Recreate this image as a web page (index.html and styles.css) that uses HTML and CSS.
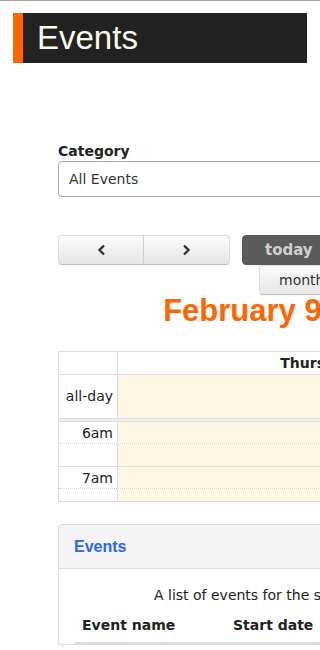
FILE: index.html
```html
<!DOCTYPE html>
<html lang="en">
<head>
<meta charset="utf-8">
<title>Events</title>
<link rel="stylesheet" href="styles.css">
</head>
<body>
<header class="page-header">
  <h1 class="page-title">Events</h1>
</header>

<main class="content">
  <div class="filter">
    <label class="filter-label" for="cat">Category</label>
    <div class="select" id="cat">All Events</div>
  </div>

  <div class="toolbar">
    <div class="btn-group">
      <button class="btn btn-nav" aria-label="prev">
        <svg width="9" height="12" viewBox="0 0 9 12"><polyline points="7,1.5 2.5,6 7,10.5" fill="none" stroke="#333" stroke-width="2.4"/></svg>
      </button>
      <button class="btn btn-nav" aria-label="next">
        <svg width="9" height="12" viewBox="0 0 9 12"><polyline points="2,1.5 6.5,6 2,10.5" fill="none" stroke="#333" stroke-width="2.4"/></svg>
      </button>
    </div>
    <button class="btn btn-today">today</button>
    <div class="views">
      <button class="btn btn-view">month</button>
      <button class="btn btn-view">week</button>
      <button class="btn btn-view">day</button>
    </div>
  </div>

  <h2 class="cal-title">February 9, 2023</h2>

  <div class="grid">
    <div class="grid-head">
      <div class="axis"></div>
      <div class="day-head">Thursday 2/9</div>
    </div>
    <div class="allday-row">
      <div class="axis axis-label">all-day</div>
      <div class="day-cell"></div>
    </div>
    <div class="divider"></div>
    <div class="slots">
      <div class="slot slot-major"><div class="axis axis-label">6am</div><div class="day-cell"></div></div>
      <div class="slot slot-minor"><div class="axis"></div><div class="day-cell"></div></div>
      <div class="slot slot-major"><div class="axis axis-label">7am</div><div class="day-cell"></div></div>
      <div class="slot slot-minor"><div class="axis"></div><div class="day-cell"></div></div>
      <div class="slot slot-major"><div class="axis axis-label">8am</div><div class="day-cell"></div></div>
    </div>
  </div>

  <section class="panel">
    <div class="panel-head">Events</div>
    <div class="panel-body">
      <p class="caption">A list of events for the selected day</p>
      <div class="list-head">
        <span class="col-name">Event name</span>
        <span class="col-date">Start date</span>
      </div>
    </div>
  </section>
</main>
</body>
</html>
```
FILE: styles.css
```css
html, body {
  margin: 0;
  padding: 0;
}
body {
  border-top: 1px solid #a2a2a2;
  overflow: hidden;
  font-family: "DejaVu Sans", Verdana, sans-serif;
  font-size: 14px;
  color: #222;
  background: #fff;
  width: 320px;
}

.page-header {
  margin: 12px 13px 0;
  height: 50px;
  background: #222;
  border-left: 10px solid #ff6600;
  display: flex;
  align-items: center;
  padding-left: 14px;
}
.page-title {
  margin: 0;
  font-family: "Liberation Sans", Arial, sans-serif;
  font-weight: normal;
  font-size: 33px;
  line-height: 38px;
  color: #fbfbec;
}

.content {
  margin-left: 58px;
  width: 470px;
  padding-top: 80px;
}

.filter-label {
  display: block;
  font-weight: bold;
  font-size: 14px;
  line-height: 17px;
  margin-bottom: 1px;
}
.select {
  box-sizing: border-box;
  height: 36px;
  border: 1px solid #aaa;
  border-radius: 4px;
  padding: 0 10px;
  display: flex;
  align-items: center;
  color: #333;
  font-size: 14px;
}

.toolbar {
  margin-top: 38px;
  display: flex;
  flex-wrap: wrap;
  align-items: flex-start;
}
.btn {
  box-sizing: border-box;
  height: 30px;
  font-family: "DejaVu Sans", Verdana, sans-serif;
  font-size: 14px;
  color: #333;
  border: 1px solid;
  border-color: #dcdcdc #dcdcdc #bfbfbf;
  background: linear-gradient(to bottom, #fbfbfb, #e6e6e6);
  border-radius: 4px;
  box-shadow: 0 1px 2px rgba(0,0,0,.06);
  padding: 0;
  margin: 0;
  display: flex;
  align-items: center;
  justify-content: center;
}
.btn-group {
  display: flex;
}
.btn-nav {
  width: 86px;
}
.btn-nav:first-child {
  border-radius: 4px 0 0 4px;
}
.btn-nav:last-child {
  border-radius: 0 4px 4px 0;
  border-left-color: #cfcfcf;
  margin-left: -1px;
  width: 87px;
}
.btn-today {
  margin-left: 12px;
  width: 100px;
  height: 30px;
  background: #5b5b5b;
  border-color: #5b5b5b;
  color: #cfcfcf;
  font-size: 15px;
  font-weight: bold;
  justify-content: flex-start;
  padding-left: 22px;
}
.views {
  display: flex;
  margin-left: 201px;
  width: 320px;
}
.btn-view {
  padding: 0 26px 0 19px;
  border-radius: 0;
  margin-right: -1px;
}
.btn-view:first-child {
  border-radius: 4px 0 0 4px;
}

.cal-title {
  margin: 0;
  width: 455px;
  text-align: center;
  font-family: "Liberation Sans", Arial, sans-serif;
  font-weight: bold;
  font-size: 31px;
  line-height: 32px;
  color: #ff6600;
}

.grid {
  margin-top: 24px;
  width: 486px;
  border: 1px solid #ddd;
}
.grid-head, .allday-row, .slot {
  display: flex;
}
.axis {
  box-sizing: border-box;
  width: 59px;
  flex: none;
  border-right: 1px solid #ddd;
  background: #fff;
}
.day-head {
  flex: 1;
  height: 22px;
  line-height: 22px;
  text-align: center;
  font-weight: bold;
  color: #222;
}
.grid-head {
  border-bottom: 1px solid #ddd;
}
.allday-row {
  height: 43px;
}
.allday-row .axis-label {
  display: flex;
  align-items: center;
  justify-content: flex-end;
  padding-right: 4px;
  padding-bottom: 1px;
}
.day-cell {
  flex: 1;
  background: #fcf6e2;
}
.divider {
  height: 2px;
  background: #eee;
  border-top: 1px solid #ddd;
  border-bottom: 1px solid #ddd;
}
.slots {
  height: 79px;
  overflow: hidden;
}
.slot-major {
  height: 21px;
  border-bottom: 1px dotted #d4d4d4;
}
.slot-minor {
  height: 22px;
  border-bottom: 1px solid #ddd;
}
.slot .axis-label {
  text-align: right;
  padding-right: 4px;
  line-height: 22px;
}

.panel {
  margin-top: 22px;
  width: 470px;
  border: 1px solid #ddd;
  border-radius: 4px 4px 0 0;
}
.panel-head {
  height: 43px;
  background: #f4f4f4;
  border-bottom: 1px solid #ddd;
  border-radius: 4px 4px 0 0;
  padding-left: 15px;
  display: flex;
  align-items: center;
  font-family: "Liberation Sans", Arial, sans-serif;
  font-weight: bold;
  font-size: 16px;
  color: #2d63fb;
}
.panel-body {
  padding: 0 15px;
}
.caption {
  margin: 18px 0 0;
  padding-left: 80px;
  line-height: 17px;
  color: #222;
}
.list-head {
  display: flex;
  padding-top: 13px;
  padding-bottom: 8px;
  border-bottom: 2px solid #ddd;
  font-weight: bold;
  line-height: 17px;
}
.col-name {
  width: 151px;
  padding-left: 8px;
  box-sizing: border-box;
}
.col-date {
  padding-left: 8px;
}
```
